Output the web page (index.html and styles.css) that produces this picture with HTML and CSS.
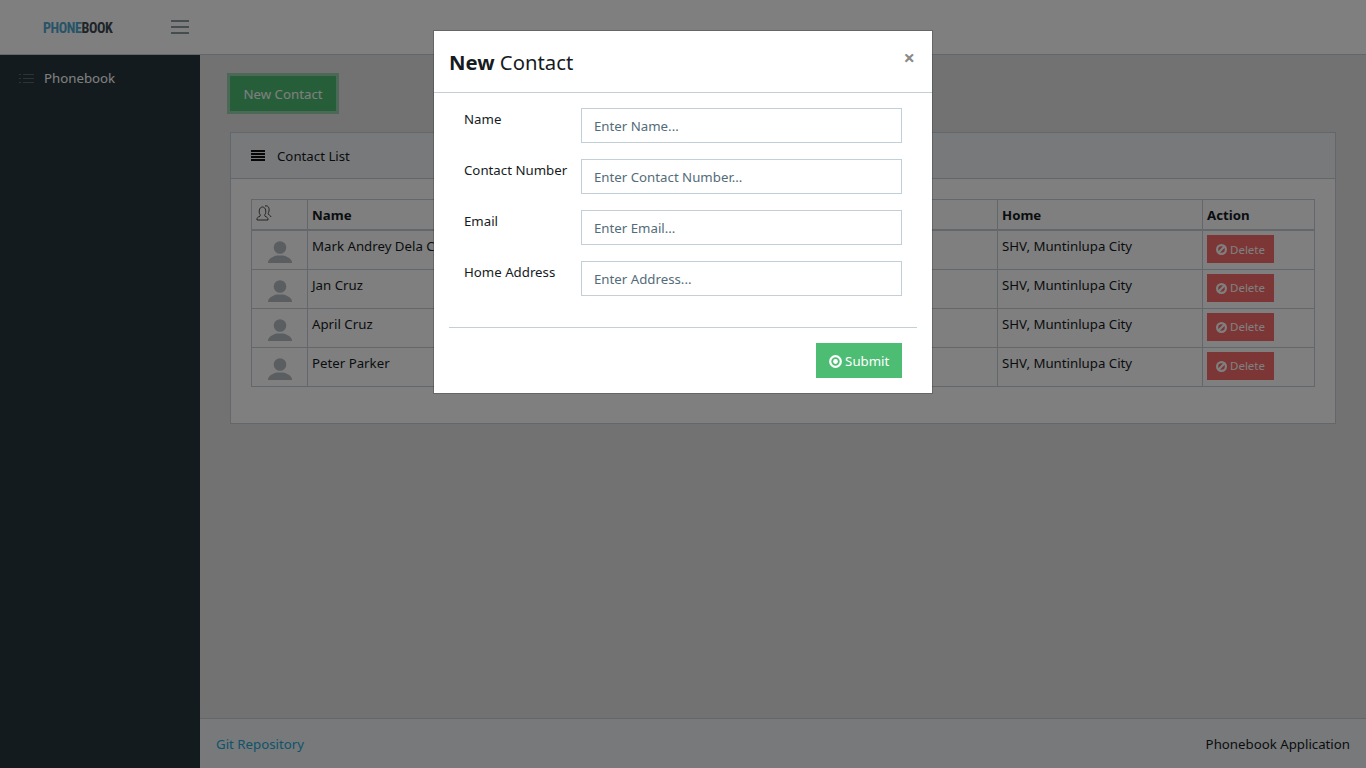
FILE: index.html
```html
<!DOCTYPE html>
<html lang="en">
<head>
	<meta charset="UTF-8">
	<title>Phonebook</title>
	<link rel="stylesheet" href="styles.css">
</head>
<body>
	<header class="topbar">
		<div class="brand"><span class="brand-blue">PHONE</span>BOOK</div>
		<svg class="burger" width="18" height="16" viewBox="0 0 18 16"><path d="M0 2h18M0 8h18M0 14h18" stroke="#8c9aa3" stroke-width="2" fill="none"/></svg>
	</header>
	<div class="app-body">
		<nav class="sidebar">
			<a class="nav-link" href="#">
				<svg class="nav-icon" width="15" height="10" viewBox="0 0 15 10"><path d="M0 .5h2M4 .5h11M0 4.500h2M4 4.500h11M0 8.500h2M4 8.500h11" stroke="#5a666e" fill="none"/></svg>
				Phonebook
			</a>
		</nav>
		<div class="main-col">
			<main class="main">
				<button class="btn-new">New Contact</button>
				<section class="card">
					<div class="card-header">
						<svg width="14" height="11" viewBox="0 0 14 11"><path d="M0 1h14M0 4h14M0 7h14M0 10h14" stroke="#111" stroke-width="2" fill="none"/></svg>
						<span class="card-title">Contact List</span>
					</div>
					<div class="card-body">
						<table class="contacts">
							<thead>
								<tr>
									<th class="col-pic"><svg class="people" width="16" height="16" viewBox="0 0 16 16"><path d="M1 15c-.4-2 .8-3 3-3.800.5-.8.3-1.500-.3-2.300C2.700 7.500 3 2 6.500 2s3.800 5.500 2.800 6.900c-.6.800-.8 1.500-.3 2.300 2 .8 3.300 1.800 3 3.800zM9 1c3-.8 4.500 1.500 4 5-.2 1.500-.8 2-1 3 .2.800 2.500 1 3 3" fill="none" stroke="#333" stroke-width=".9"/></svg></th>
									<th class="col-name">Name</th>
									<th class="col-num">Contact Number</th>
									<th class="col-mail">Email</th>
									<th class="col-home">Home</th>
									<th class="col-act">Action</th>
								</tr>
							</thead>
							<tbody>
								<tr>
									<td class="pic"><svg class="avatar" width="24" height="22" viewBox="0 0 24 22"><circle cx="12" cy="6.500" r="6.300"/><path d="M0 22c0-4 4-6 8.500-7.500h7c4.500 1.500 8.500 3.500 8.500 7.500z"/></svg></td>
									<td>Mark Andrey Dela Cruz</td><td></td><td></td><td>SHV, Muntinlupa City</td>
									<td class="act"><button class="btn-del"><svg width="11" height="11" viewBox="0 0 12 12"><circle cx="6" cy="6" r="4.800" fill="none" stroke="currentColor" stroke-width="2.400"/><path d="M2.800 9.200l6.400-6.400" stroke="currentColor" stroke-width="2.400"/></svg> Delete</button></td>
								</tr>
								<tr>
									<td class="pic"><svg class="avatar" width="24" height="22" viewBox="0 0 24 22"><circle cx="12" cy="6.500" r="6.300"/><path d="M0 22c0-4 4-6 8.500-7.500h7c4.500 1.500 8.500 3.500 8.500 7.500z"/></svg></td>
									<td>Jan Cruz</td><td></td><td></td><td>SHV, Muntinlupa City</td>
									<td class="act"><button class="btn-del"><svg width="11" height="11" viewBox="0 0 12 12"><circle cx="6" cy="6" r="4.800" fill="none" stroke="currentColor" stroke-width="2.400"/><path d="M2.800 9.200l6.400-6.400" stroke="currentColor" stroke-width="2.400"/></svg> Delete</button></td>
								</tr>
								<tr>
									<td class="pic"><svg class="avatar" width="24" height="22" viewBox="0 0 24 22"><circle cx="12" cy="6.500" r="6.300"/><path d="M0 22c0-4 4-6 8.500-7.500h7c4.500 1.500 8.500 3.500 8.500 7.500z"/></svg></td>
									<td>April Cruz</td><td></td><td></td><td>SHV, Muntinlupa City</td>
									<td class="act"><button class="btn-del"><svg width="11" height="11" viewBox="0 0 12 12"><circle cx="6" cy="6" r="4.800" fill="none" stroke="currentColor" stroke-width="2.400"/><path d="M2.800 9.200l6.400-6.400" stroke="currentColor" stroke-width="2.400"/></svg> Delete</button></td>
								</tr>
								<tr>
									<td class="pic"><svg class="avatar" width="24" height="22" viewBox="0 0 24 22"><circle cx="12" cy="6.500" r="6.300"/><path d="M0 22c0-4 4-6 8.500-7.500h7c4.500 1.500 8.500 3.500 8.500 7.500z"/></svg></td>
									<td>Peter Parker</td><td></td><td></td><td>SHV, Muntinlupa City</td>
									<td class="act"><button class="btn-del"><svg width="11" height="11" viewBox="0 0 12 12"><circle cx="6" cy="6" r="4.800" fill="none" stroke="currentColor" stroke-width="2.400"/><path d="M2.800 9.200l6.400-6.400" stroke="currentColor" stroke-width="2.400"/></svg> Delete</button></td>
								</tr>
							</tbody>
						</table>
					</div>
				</section>
			</main>
			<footer class="footer">
				<a href="#">Git Repository</a>
				<span>Phonebook Application</span>
			</footer>
		</div>
	</div>

	<div class="backdrop"></div>
	<div class="modal">
		<div class="modal-header">
			<h4><b>New</b> Contact</h4>
			<span class="close">×</span>
		</div>
		<form class="modal-body">
			<div class="row"><label>Name</label><input type="text" placeholder="Enter Name..."></div>
			<div class="row"><label>Contact Number</label><input type="text" placeholder="Enter Contact Number..."></div>
			<div class="row"><label>Email</label><input type="text" placeholder="Enter Email..."></div>
			<div class="row"><label>Home Address</label><input type="text" placeholder="Enter Address..."></div>
			<hr>
			<div class="actions">
				<button type="button" class="btn-submit"><svg width="13" height="13" viewBox="0 0 13 13"><circle cx="6.500" cy="6.500" r="5.300" fill="none" stroke="#fff" stroke-width="2.200"/><circle cx="6.500" cy="6.500" r="2.400" fill="#fff"/></svg> Submit</button>
			</div>
		</form>
	</div>
</body>
</html>
```

FILE: styles.css
```css
*{margin:0;padding:0;box-sizing:border-box;}
body{
	height: 768px;
	overflow: hidden;
	display: flex;
	flex-direction: column;
	font-family: "Noto Sans", "Open Sans", sans-serif;
	font-size: 13.250px;
	line-height: 21px;
	color: #151b1e;
	background: #e4e5e6;
}
a{text-decoration: none;}
button{font-family: inherit;border: 0;}

.topbar{
	height: 55px;
	flex: none;
	display: flex;
	align-items: center;
	background: #fff;
	border-bottom: 1px solid #c2cfd6;
}
.brand{
	width: 171px;
	padding: 2px 0 0 43px;
	font-family: "Liberation Sans Narrow", "Roboto Condensed", Roboto, sans-serif;
	font-size: 14px;
	font-weight: bold;
	letter-spacing: -.4px;
	color: #3c4a52;
}
.brand-blue{color: #4fa8cf;}
.burger{display: block;}

.app-body{flex: 1;display: flex;min-height: 0;}
.sidebar{
	width: 200px;
	flex: none;
	background: #27373d;
}
.nav-link{
	display: flex;
	align-items: center;
	gap: 10px;
	padding: 13px 19px;
	color: #fff;
}
.main-col{flex: 1;display: flex;flex-direction: column;min-width: 0;}
.main{flex: 1;padding: 21px 30px 0;}

.btn-new{
	display: block;
	width: 106px;
	height: 35px;
	background: #4dbd74;
	color: #fff;
	font-size: 13.250px;
	box-shadow: 0 0 0 3px rgba(77,189,116,.5);
}
.card{
	margin-top: 21px;
	background: #fff;
	border: 1px solid #c2cfd6;
	width: 1106px;
}
.card-header{
	height: 46px;
	display: flex;
	align-items: center;
	gap: 12px;
	padding-left: 20px;
	background: #f0f3f5;
	border-bottom: 1px solid #c2cfd6;
}
.card-title{padding-top: 2px;}
.card-body{padding: 20px 20px 36px;}

.contacts{
	width: 1063px;
	table-layout: fixed;
	border-collapse: collapse;
}
.contacts th,.contacts td{
	border: 1px solid #c2cfd6;
	padding: 5px 4px 3px;
	text-align: left;
	vertical-align: top;
	height: 39px;
}
.contacts th{
	height: 30px;
	border-bottom-width: 2px;
	font-weight: bold;
}
.col-pic{width: 56px;}
.col-name,.col-num,.col-mail{width: 230px;}
.col-home{width: 205px;}
.col-act{width: 112px;}
.people{display: block;}
.contacts td.pic{text-align: center;padding: 10px 0 0;}
.contacts td.act{padding-top: 4px;}
.avatar{display: block;margin: 0 auto;fill: #b4bcc0;}
.btn-del{
	display: block;
	width: 67px;
	height: 28px;
	background: #f86c6b;
	color: #fff;
	font-size: 11.500px;
}
.btn-del svg{vertical-align: -1.500px;}

.footer{
	height: 50px;
	flex: none;
	display: flex;
	align-items: center;
	justify-content: space-between;
	padding: 2px 16px 0;
	background: #f0f3f5;
	border-top: 1px solid #c2cfd6;
}
.footer a{color: #20a8d8;}

.backdrop{
	position: fixed;
	inset: 0;
	background: rgba(0,0,0,.5);
}
.modal{
	position: fixed;
	left: 433px;
	top: 30px;
	width: 500px;
	background: #fff;
	background-clip: padding-box;
	border: 1px solid rgba(0,0,0,.2);
}
.modal-header{
	height: 62px;
	display: flex;
	justify-content: space-between;
	padding: 15px 17px 0 15px;
	border-bottom: 1px solid #c2cfd6;
}
.modal-header h4{font-size: 20.300px;line-height: 32px;font-weight: normal;}
.close{font-size: 20px;font-weight: bold;color: #8a8a8a;line-height: 24px;}

.modal-body{padding: 15px 15px 15px;}
.row{
	display: flex;
	padding: 0 15px;
	margin-bottom: 16px;
}
.row label{width: 117px;flex: none;padding-top: 0;line-height: 22px;}
.row input{
	flex: 1;
	height: 35px;
	min-width: 0;
	padding: 0 12px;
	font-family: inherit;
	font-size: 13.250px;
	color: #3e515b;
	border: 1px solid #c2cfd6;
	outline: 0;
}
.row input::placeholder{color: #536c79;opacity: 1;}
.modal-body hr{
	margin-top: 31px;
	border: 0;
	border-top: 1px solid #c2cfd6;
}
.actions{display: flex;justify-content: flex-end;padding: 15px 15px 0;}
.btn-submit{
	width: 86px;
	height: 35px;
	background: #4dbd74;
	color: #fff;
	font-size: 13.250px;
}
.btn-submit svg{vertical-align: -2px;}
```
